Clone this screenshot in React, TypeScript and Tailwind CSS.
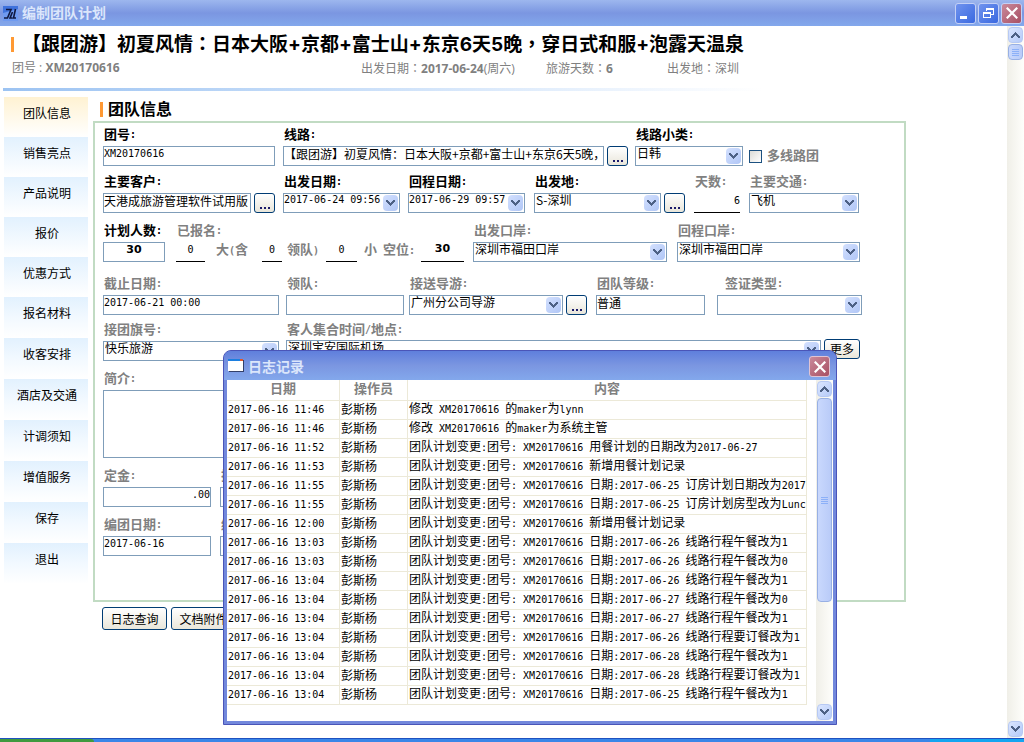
import React, { useId } from 'react';

type Tone = 'black' | 'gray';

function Mixed({ text }: { text: string }) {
  const parts = text.split(/([\x20-\x7e]+)/).filter(Boolean);
  return (
    <>
      {parts.map((p, i) =>
        /^[\x20-\x7e]/.test(p) ? (
          <span key={i} className="font-['DejaVu_Sans_Mono',monospace] text-[10px] whitespace-pre">
            {p}
          </span>
        ) : (
          <span key={i}>{p}</span>
        ),
      )}
    </>
  );
}

/* Full-width punctuation set in the middle of its cell. */
function Mark({ children }: { children: string }) {
  return <span className="font-['Noto_Sans_CJK_TC',sans-serif]">{children}</span>;
}

function Chevron({ up = false }: { up?: boolean }) {
  return (
    <svg viewBox="0 0 9 6" width="9" height="6" shapeRendering="crispEdges" className={up ? 'rotate-180' : ''}>
      <path d="M0 0h2v1h1v1h1v1h1v-1h1v-1h1v-1h2v2h-1v1h-1v1h-1v1h-1v1h-1v-1h-1v-1h-1v-1h-1v-1h-1z" fill="#4d6185" />
    </svg>
  );
}

function Field({
  label,
  tone = 'gray',
  className,
  children,
}: {
  label: string;
  tone?: Tone;
  className?: string;
  children: (id: string) => React.ReactNode;
}) {
  const id = useId();
  return (
    <div className={className}>
      <label
        htmlFor={id}
        className={`flex h-[22px] items-center whitespace-nowrap pb-0.5 pl-px text-[13px] font-bold ${tone === 'black' ? 'text-black' : 'text-[#808080]'}`}
      >
        <Mixed text={label} />
      </label>
      <div className="flex h-5 gap-[3px]">{children(id)}</div>
    </div>
  );
}

const box = 'h-5 min-w-0 rounded-none border border-[#7f9db9] bg-white pb-1.5 text-black outline-none';
const cjk = 'text-[12px] leading-[12px]';
const mono = "font-['DejaVu_Sans_Mono',monospace] text-[10px] leading-[12px]";

function TextBox({ id, value = '', className = '' }: { id: string; value?: string; className?: string }) {
  return <input id={id} type="text" defaultValue={value} className={`${box} ${className}`} />;
}

function DropDown({
  id,
  value = '',
  className = '',
  font = cjk,
}: {
  id: string;
  value?: string;
  className?: string;
  font?: string;
}) {
  return (
    <div className={`relative ${className}`}>
      <select id={id} defaultValue={value} className={`${box} ${font} block w-full appearance-none pr-4 ${font === mono ? 'pl-0' : 'pl-px'}`}>
        <option value={value}>{value}</option>
      </select>
      <span className="pointer-events-none absolute right-0.5 top-0.5 flex h-4 w-[15px] items-center justify-center rounded-sm bg-linear-to-br from-[#d3e0fe] to-[#b0c6f6]">
        <Chevron />
      </span>
    </div>
  );
}

const xpButton = 'rounded-[3px] border border-[#003c74] bg-linear-to-b from-white to-[#e9e6da] text-[12px] text-black';

function More({ name }: { name: string }) {
  return (
    <button type="button" aria-label={name} className={`${xpButton} flex h-5 w-[21px] shrink-0 items-end justify-center gap-0.5 pb-[3px]`}>
      <span className="size-0.5 bg-[#1a1a6a]" />
      <span className="size-0.5 bg-[#1a1a6a]" />
      <span className="size-0.5 bg-[#1a1a6a]" />
    </button>
  );
}

function Count({ name, value, className }: { name: string; value: string; className: string }) {
  return (
    <input
      aria-label={name}
      type="text"
      defaultValue={value}
      className={`h-5 min-w-0 border-b border-black bg-transparent pb-1 outline-none ${mono} ${className}`}
    />
  );
}

const grayText = 'whitespace-nowrap text-[13px] font-bold text-[#808080]';

function ScrollBar({ thumb }: { thumb: string }) {
  const end = 'flex h-4 w-[15px] shrink-0 items-center justify-center rounded-sm border border-[#b7c9f3] bg-linear-to-br from-[#dbe6ff] to-[#b5caf8]';
  return (
    <div className="flex w-[17px] shrink-0 flex-col items-center bg-linear-to-r from-[#f0efe8] to-[#fefefb] py-px">
      <button type="button" aria-label="向上滚动" className={end}>
        <Chevron up />
      </button>
      <div
        className={`mt-px flex w-[15px] flex-col items-center justify-center gap-px rounded-sm border border-[#98b0e4] bg-linear-to-r from-[#c9d8fd] to-[#b9cbf8] ${thumb}`}
      >
        {[0, 1, 2, 3].map((i) => (
          <span key={i} className="h-px w-[7px] bg-[#8cb0f8]" />
        ))}
      </div>
      <button type="button" aria-label="向下滚动" className={`${end} mt-auto`}>
        <Chevron />
      </button>
    </div>
  );
}

function CloseIcon() {
  return (
    <svg viewBox="0 0 12 12" width="12" height="12" stroke="#fff" strokeWidth="2.2" strokeLinecap="square">
      <path d="M1.5 1.5l9 9M10.5 1.5l-9 9" />
    </svg>
  );
}

function TitleBar() {
  const btn = 'flex size-[21px] items-center justify-center rounded-[3px] border border-[#c3d0f6]';
  return (
    <header className="flex h-[26px] items-center gap-1 bg-linear-to-b from-[#9db7ee] via-[#7b96e1] to-[#83a8ec] pl-[3px] pr-0.5">
      <svg viewBox="0 0 15 15" width="15" height="15">
        <rect width="15" height="15" fill="#3f72dc" />
        <path d="M0 15V7L15 3v12z" fill="#6f9af0" />
        <path d="M3 3.500h5L4.500 12M1 12h4M9.500 6L7 12h2.500M12.500 3L10.500 12H13" fill="none" stroke="#101840" strokeWidth="1.600" />
      </svg>
      <h1 className="flex-1 pb-0.5 text-[14px] font-bold leading-5 text-[#dbe6fb]">编制团队计划</h1>
      <div className="flex gap-0.5">
        <button type="button" aria-label="最小化" className={`${btn} bg-linear-to-br from-[#7093ee] to-[#3a68e0]`}>
          <svg viewBox="0 0 13 13" width="13" height="13">
            <path d="M1 9h7v3H1z" fill="#fff" />
          </svg>
        </button>
        <button type="button" aria-label="还原" className={`${btn} bg-linear-to-br from-[#7093ee] to-[#3a68e0]`}>
          <svg viewBox="0 0 13 13" width="13" height="13" fill="none" stroke="#fff" shapeRendering="crispEdges">
            <path d="M4.500 4V1.500h7v6H9M4 2.500h8M1.500 5.500h6.500v5H1.500zM1 6.500h7" />
          </svg>
        </button>
        <button type="button" aria-label="关闭" className={`${btn} bg-linear-to-br from-[#c98a9c] to-[#a84f63]`}>
          <CloseIcon />
        </button>
      </div>
    </header>
  );
}

const upperNav = ['团队信息', '销售亮点', '产品说明', '报价', '优惠方式'];
const lowerNav = ['报名材料', '收客安排', '酒店及交通', '计调须知', '增值服务', '保存', '退出'];

function Side() {
  const item = 'flex w-full justify-center pl-0.5 pt-[7px] text-[12px] leading-[18px] text-black bg-linear-to-b';
  return (
    <nav className="w-[84px] shrink-0">
      {upperNav.map((n, i) => (
        <button key={n} type="button" className={`${item} h-10 to-white ${i === 0 ? 'from-[#fff2d2]' : 'from-[#e2f1fe]'}`}>
          {n}
        </button>
      ))}
      {lowerNav.map((n) => (
        <button key={n} type="button" className={`${item} h-[41px] from-[#e2f1fe] via-[#f2f9ff] to-white`}>
          {n}
        </button>
      ))}
    </nav>
  );
}

function Form() {
  return (
    <form className="w-full max-w-[813px] border-2 border-[#c1dbc3] px-2 pb-11 pt-px">
      <div className="grid grid-cols-[180px_352px_112px_1fr]">
        <Field label="团号:" tone="black">
          {(id) => <TextBox id={id} value="XM20170616" className={`${mono} w-[172px]`} />}
        </Field>
        <Field label="线路:" tone="black">
          {(id) => (
            <>
              <TextBox id={id} value="【跟团游】初夏风情：日本大阪+京都+富士山+东京6天5晚，穿日式和服+泡露天温泉" className={`${cjk} w-[321px]`} />
              <More name="选择线路" />
            </>
          )}
        </Field>
        <Field label="线路小类:" tone="black">
          {(id) => <DropDown id={id} value="日韩" className="w-[108px]" />}
        </Field>
        <label className={`flex items-center gap-[5px] self-end ${grayText} h-5 pl-0.5`}>
          <input type="checkbox" className="size-[13px] appearance-none border border-[#1c5180] bg-linear-to-br from-[#dcdcd7] to-white" />
          <span className="pb-0.5">多线路团</span>
        </label>
      </div>

      <div className="mt-[5px] grid grid-cols-[180px_125px_126px_160px_55px_1fr]">
        <Field label="主要客户:" tone="black">
          {(id) => (
            <>
              <TextBox id={id} value="天港成旅游管理软件试用版" className={`${cjk} w-[148px]`} />
              <More name="选择客户" />
            </>
          )}
        </Field>
        <Field label="出发日期:" tone="black">
          {(id) => <DropDown id={id} value="2017-06-24 09:56" font={mono} className="w-[117px]" />}
        </Field>
        <Field label="回程日期:" tone="black">
          {(id) => <DropDown id={id} value="2017-06-29 09:57" font={mono} className="w-[117px]" />}
        </Field>
        <Field label="出发地:" tone="black">
          {(id) => (
            <>
              <DropDown id={id} value="S-深圳" className="w-[127px]" />
              <More name="选择出发地" />
            </>
          )}
        </Field>
        <Field label="天数:">
          {(id) => (
            <input id={id} type="text" defaultValue="6" className={`${mono} h-5 w-[46px] border-b border-black pb-1 text-right outline-none`} />
          )}
        </Field>
        <Field label="主要交通:">
          {(id) => <DropDown id={id} value="飞机" className="w-[110px]" />}
        </Field>
      </div>

      <div className="mt-[7px] grid grid-cols-[73px_297px_204px_1fr]">
        <Field label="计划人数:" tone="black">
          {(id) => <TextBox id={id} value="30" className="w-[62px] text-center font-['DejaVu_Sans',sans-serif] text-[11px] font-bold leading-[12px]" />}
        </Field>
        <Field label="已报名:">
          {(id) => (
            <div className={`grid grid-cols-[40px_46px_25px_39px_38px_57px_1fr] items-center ${grayText}`}>
              <input id={id} type="text" defaultValue="0" className={`${mono} h-5 w-[29px] border-b border-black pb-1 text-center font-normal text-black outline-none`} />
              <span className="leading-[14px] pb-1"><Mixed text="大(含" /></span>
              <Count name="领队人数" value="0" className="w-5 text-center font-normal text-black" />
              <span className="leading-[14px] pb-1"><Mixed text="领队)" /></span>
              <Count name="小童人数" value="0" className="w-[31px] text-center font-normal text-black" />
              <span className="leading-[14px] pb-1"><Mixed text="小 空位:" /></span>
              <input
                aria-label="空位"
                type="text"
                defaultValue="30"
                className="h-5 w-[43px] border-b border-black pb-1.5 text-center font-['DejaVu_Sans',sans-serif] text-[11px] font-bold leading-[12px] text-black outline-none"
              />
            </div>
          )}
        </Field>
        <Field label="出发口岸:">
          {(id) => <DropDown id={id} value="深圳市福田口岸" className="w-[194px]" />}
        </Field>
        <Field label="回程口岸:">
          {(id) => <DropDown id={id} value="深圳市福田口岸" className="w-[183px]" />}
        </Field>
      </div>

      <div className="mt-[11px] grid grid-cols-[183px_123px_187px_121px_1fr]">
        <Field label="截止日期:">
          {(id) => <TextBox id={id} value="2017-06-21 00:00" className={`${mono} w-[176px]`} />}
        </Field>
        <Field label="领队:">{(id) => <TextBox id={id} className={`${cjk} w-[118px]`} />}</Field>
        <Field label="接送导游:">
          {(id) => (
            <>
              <DropDown id={id} value="广州分公司导游" className="w-[154px]" />
              <More name="选择导游" />
            </>
          )}
        </Field>
        <Field label="团队等级:">{(id) => <TextBox id={id} value="普通" className={`${cjk} w-[109px]`} />}</Field>
        <Field label="签证类型:" className="[&>label]:pl-2">
          {(id) => <DropDown id={id} className="w-[145px]" />}
        </Field>
      </div>

      <div className="mt-1 grid grid-cols-[183px_1fr]">
        <Field label="接团旗号:">
          {(id) => <DropDown id={id} value="快乐旅游" className="w-[176px]" />}
        </Field>
        <Field label="客人集合时间/地点:">
          {(id) => (
            <>
              <DropDown id={id} value="深圳宝安国际机场" className="-mt-px w-[535px]" />
              <button type="button" className={`${xpButton} -mt-0.5 h-5 w-9 leading-none`}>
                更多
              </button>
            </>
          )}
        </Field>
      </div>

      <div className="mt-[7px]">
        <label htmlFor="intro" className={`flex h-[22px] items-center pb-0.5 pl-px ${grayText}`}>
          <Mixed text="简介:" />
        </label>
        <textarea id="intro" className="block h-[68px] w-full max-w-[700px] resize-none border border-[#7f9db9] text-[12px] outline-none" />
      </div>

      <div className="mt-[7px] grid grid-cols-[117px_1fr]">
        <Field label="定金:">
          {(id) => <TextBox id={id} value=".00" className={`${mono} w-[108px] text-right`} />}
        </Field>
        <Field label="押金:">{(id) => <TextBox id={id} className={`${mono} w-[108px]`} />}</Field>
      </div>
      <div className="mt-[7px] grid grid-cols-[117px_1fr]">
        <Field label="编团日期:">
          {(id) => <TextBox id={id} value="2017-06-16" className={`${mono} w-[108px]`} />}
        </Field>
        <Field label="编团人:">{(id) => <TextBox id={id} className={`${mono} w-[108px]`} />}</Field>
      </div>
    </form>
  );
}

const P = '团队计划变更:团号: XM20170616 ';
const log: [string, string][] = [
  ['11:46', '修改 XM20170616 的maker为lynn'],
  ['11:46', '修改 XM20170616 的maker为系统主管'],
  ['11:52', P + '用餐计划的日期改为2017-06-27'],
  ['11:53', P + '新增用餐计划记录'],
  ['11:55', P + '日期:2017-06-25 订房计划日期改为2017-06-27'],
  ['11:55', P + '日期:2017-06-25 订房计划房型改为Lunch'],
  ['12:00', P + '新增用餐计划记录'],
  ['13:03', P + '日期:2017-06-26 线路行程午餐改为1'],
  ['13:03', P + '日期:2017-06-26 线路行程午餐改为0'],
  ['13:04', P + '日期:2017-06-26 线路行程午餐改为1'],
  ['13:04', P + '日期:2017-06-27 线路行程午餐改为0'],
  ['13:04', P + '日期:2017-06-27 线路行程午餐改为1'],
  ['13:04', P + '日期:2017-06-26 线路行程要订餐改为1'],
  ['13:04', P + '日期:2017-06-28 线路行程午餐改为1'],
  ['13:04', P + '日期:2017-06-28 线路行程要订餐改为1'],
  ['13:04', P + '日期:2017-06-25 线路行程午餐改为1'],
];

function LogDialog() {
  const cell = 'h-[19px] overflow-hidden whitespace-nowrap border-b border-r border-[#ece9d8] p-0 pb-0.5 pl-px leading-[14px]';
  return (
    <section
      role="dialog"
      aria-label="日志记录"
      className="absolute left-[223px] top-[350px] w-[614px] rounded-t-lg border border-[#4a55b8] bg-[#7288dc] px-[3px] pb-[3px]"
    >
      <div className="-mx-[3px] flex h-[29px] items-center gap-1 rounded-t-[7px] bg-linear-to-b from-[#5f7fdc] via-[#7b96e1] to-[#83a8ec] px-1">
        <svg viewBox="0 0 16 13" width="16" height="13">
          <path d="M1 1h15v12H1z" fill="#33406a" />
          <path d="M0 0h15v12H0z" fill="#fff" />
          <path d="M0 0h15v2H0z" fill="#1c7fe0" />
          <path d="M12 0h3v2h-3z" fill="#e0572d" />
        </svg>
        <h2 className="flex-1 text-[14px] font-bold leading-5 text-[#dbe6fb]">日志记录</h2>
        <button
          type="button"
          aria-label="关闭"
          className="mr-0.5 mt-0.5 flex size-[21px] items-center justify-center rounded-[3px] border border-[#e0c4d4] bg-linear-to-br from-[#c98a9c] to-[#a84f63]"
        >
          <CloseIcon />
        </button>
      </div>
      <div className="flex h-[341px] bg-white">
        <div className="min-w-0 flex-1">
          <table className="w-[580px] table-fixed border-separate border-spacing-0 text-left text-[12px] text-black">
            <colgroup>
              <col className="w-[113px]" />
              <col className="w-[68px]" />
              <col />
            </colgroup>
            <thead>
              <tr className="text-center text-[#808080]">
                {['日期', '操作员', '内容'].map((h) => (
                  <th key={h} className="h-[21px] border-b border-r border-[#ece9d8] p-0 pb-1 text-[13px] font-bold leading-[16px]">
                    {h}
                  </th>
                ))}
              </tr>
            </thead>
            <tbody>
              {log.map(([t, c], i) => (
                <tr key={i}>
                  <td className={cell}>
                    <Mixed text={`2017-06-16 ${t}`} />
                  </td>
                  <td className={cell}>彭斯杨</td>
                  <td className={cell}>
                    <Mixed text={c} />
                  </td>
                </tr>
              ))}
            </tbody>
          </table>
        </div>
        <ScrollBar thumb="h-[204px]" />
      </div>
    </section>
  );
}

export default function App() {
  return (
    <div className="relative flex min-h-screen w-full flex-col bg-white font-['Noto_Sans_CJK_SC',sans-serif]">
      <TitleBar />
      <div className="flex flex-1">
        <main className="min-w-0 flex-1 pl-[3px]">
          <div className="flex items-center gap-[8px] pl-2 pt-[6px]">
            <span className="h-[15px] w-[3px] bg-[#ff9933]" />
            <h2 className="h-6 whitespace-nowrap font-['Inter','Noto_Sans_CJK_SC',sans-serif] text-[19px] font-bold leading-[22px] text-black">
              【跟团游】初夏风情<Mark>：</Mark>日本大阪+京都+富士山+东京6天5晚<Mark>，</Mark>穿日式和服+泡露天温泉
            </h2>
          </div>
          <div className="grid h-[22px] grid-cols-[349px_185px_121px_1fr] whitespace-nowrap pl-[9px] pt-1 font-['Open_Sans','Noto_Sans_CJK_SC',sans-serif] text-[12px] font-bold leading-[16px] text-[#808080]">
            <p>
              <span className="font-normal">团号 : </span>XM20170616
            </p>
            <p>
              <span className="font-normal">出发日期<Mark>：</Mark></span>2017-06-24<span className="font-normal">(周六)</span>
            </p>
            <p>
              <span className="font-normal">旅游天数<Mark>：</Mark></span>6
            </p>
            <p className="font-normal">出发地<Mark>：</Mark>深圳</p>
          </div>
          <div className="mt-[10px] h-[3px] max-w-[760px] bg-linear-to-r from-[#9cc3f2] to-white" />
          <div className="flex gap-[5px] pl-px pt-[6px]">
            <Side />
            <div className="min-w-0 flex-1">
              <div className="flex h-6 items-center gap-[5px] pl-[7px]">
                <span className="h-[15px] w-[3px] bg-[#ff9933]" />
                <h3 className="pb-0.5 text-[16px] font-bold leading-[22px] text-black">团队信息</h3>
              </div>
              <Form />
              <div className="mt-[5px] flex gap-1 pl-[9px]">
                <button type="button" className={`${xpButton} h-[23px] w-[65px]`}>
                  日志查询
                </button>
                <button type="button" className={`${xpButton} h-[23px] w-[65px]`}>
                  文档附件
                </button>
              </div>
            </div>
          </div>
        </main>
        <ScrollBar thumb="h-4" />
      </div>
      <footer className="flex h-1 border-t border-[#1f52c0] bg-[#3a86e8]">
        <span className="w-[94px] rounded-tr-lg bg-[#3f9a3f]" />
        <span className="ml-auto w-[94px] bg-[#14a5f0]" />
      </footer>
      <LogDialog />
    </div>
  );
}
